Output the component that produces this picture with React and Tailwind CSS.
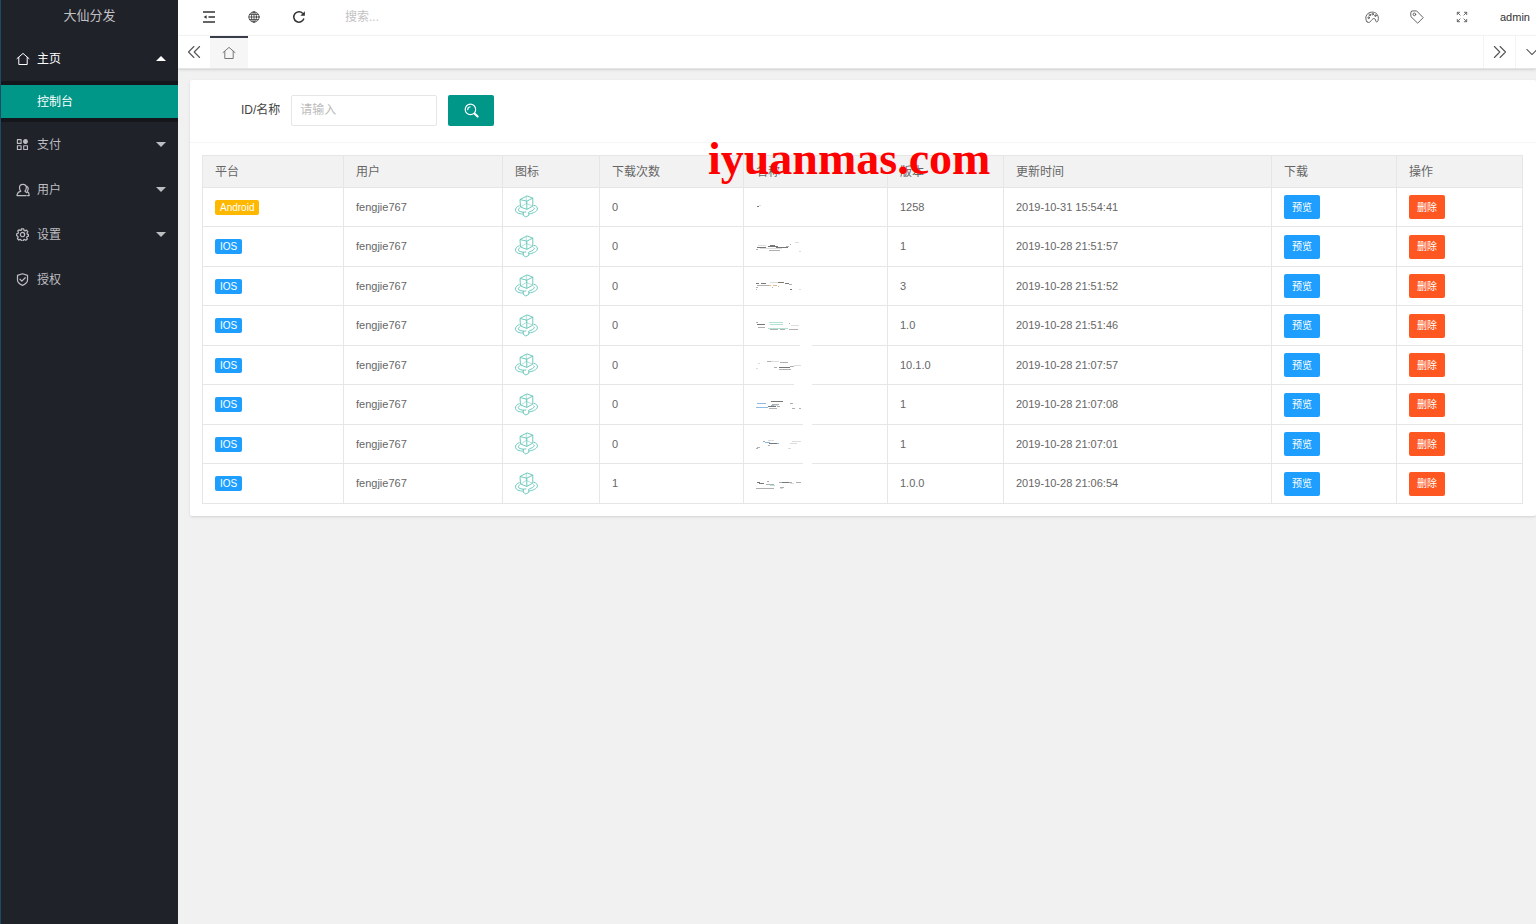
import React from "react";

const FONT = "font-['Liberation_Sans','Noto_Sans_CJK_SC',sans-serif]";

function Icon({ children, className = "size-[14px]", viewBox = "0 0 14 14", width = 1 }) {
  return (
    <svg
      className={"shrink-0 " + className}
      viewBox={viewBox}
      fill="none"
      stroke="currentColor"
      strokeWidth={width}
      strokeLinecap="round"
      strokeLinejoin="round"
      aria-hidden="true"
    >
      {children}
    </svg>
  );
}

const HomeIcon = () => (
  <Icon>
    <path d="M1 6.6 7 1.4l6 5.2M2.8 5.4v7.1h8.4V5.4" />
  </Icon>
);
const AppsIcon = () => (
  <Icon className="size-[13px]" width={1.200}>
    <path d="M1.5 1.8h4v4h-4zM1.5 8.4h4v4h-4zM8.3 8.4h4v4h-4z" />
    <circle cx="10.2" cy="3.8" r="2" fill="currentColor" />
  </Icon>
);
const UserIcon = () => (
  <Icon width={1.200}>
    <path d="M4.800 8.100C3.900 7.300 3.500 6 3.500 4.700 3.500 2.700 5 1.300 6.900 1.300s3.400 1.400 3.400 3.400c0 1.300-.5 2.600-1.400 3.400M4.800 8.100C2.500 8.900 1 10.300 1 12.600h9.200M8.900 8.100c.2.600 1.300.8 1.900 1.500M10.800 3.300c1.300.8 1.700 2.400 1.100 3.700-.3.700-.7 1.100-.4 1.600 1.100.6 1.700 2 1.700 4h-1.600" />
  </Icon>
);
const GearIcon = () => (
  <Icon className="size-[13px]" width={1.300}>
    <path d="M5.700 1h2.600l.4 1.700 1 .4 1.500-.9 1.500 1.800-.9 1.400.3 1.200 1.300.5v1.600l-1.500.6-.4 1 .7 1.500-1.700 1.400-1.300-.9-1 .4-.5 1.400H6l-.6-1.500-1-.4-1.400.8-1.500-1.700.8-1.400-.4-1L.7 8.300V6.200l1.500-.4.4-1-.7-1.500 1.500-1.400 1.400.8 1-.4z" />
    <circle cx="7" cy="7.100" r="2.300" />
  </Icon>
);
const ShieldIcon = () => (
  <Icon className="size-[13px]" width={1.300}>
    <path d="M7 .8 12.400 2.600v5c0 2.600-2.400 4.500-5.400 5.700-3-1.200-5.400-3.100-5.400-5.700v-5z" />
    <path d="m4.300 6.700 2 2 3.600-3.600" />
  </Icon>
);
const MenuFoldIcon = () => (
  <Icon width={1.300}>
    <path d="M1 2h12M6.500 7H13M1 12h12" strokeLinecap="butt" />
    <path d="M4.600 5.200v3.600L1.600 7z" fill="currentColor" stroke="none" />
  </Icon>
);
const GlobeIcon = () => (
  <Icon className="size-[12px]" width={0.900}>
    <circle cx="7" cy="7" r="6" />
    <ellipse cx="7" cy="7" rx="2.900" ry="6" />
    <path d="M7 1v12M1 7h12M1.900 4h10.200M1.900 10h10.200" />
  </Icon>
);
const RefreshIcon = () => (
  <Icon width={1.500}>
    <path d="M11.900 8.600A5.200 5.200 0 1 1 10.800 3.400" strokeLinecap="butt" />
    <path d="M12.900 1.200v4.600H8.300z" fill="currentColor" stroke="none" />
  </Icon>
);
const PaletteIcon = () => (
  <Icon width={0.900}>
    <path d="M2 11.800C.3 9.800.3 6.300 2.200 4.300 4.200 2 8 1.400 10.600 3c2.400 1.500 3.400 4.500 2.400 7.600-.3 1.300-1.400 1.700-2.100.8-.6-.8-.2-1.900-.9-2.500-.9-.8-2.200-.1-3.100.8-1 1.100-1.500 2.400-2.600 2.700-.9.200-1.700 0-2.300-.6z" />
    <circle cx="3.600" cy="7.800" r=".8" />
    <circle cx="4.800" cy="5" r=".8" />
    <circle cx="7.700" cy="4.100" r=".8" />
    <circle cx="10.400" cy="5.700" r=".8" />
  </Icon>
);
const TagIcon = () => (
  <Icon width={0.900}>
    <path d="M.9 2.600 1.600 1l5-.1 6.600 6.700-5.500 5.600L1.200 6.900z" />
    <circle cx="4.400" cy="4.400" r="1.300" />
  </Icon>
);
const ExpandIcon = () => (
  <Icon className="size-[12px]" width={1}>
    <path d="M1.500 4.200V1.500h2.700M1.800 1.800l3 3M9.800 1.500h2.700v2.700M12.200 1.800l-3 3M1.500 9.800v2.700h2.700M1.800 12.200l3-3M12.500 9.800v2.700H9.800M12.200 12.200l-3-3" />
  </Icon>
);
const DoubleLeft = () => (
  <Icon width={1.100}>
    <path d="M6.900 1.500 1.500 7l5.400 5.500M12.600 1.500 7.200 7l5.400 5.500" />
  </Icon>
);
const DoubleRight = () => (
  <Icon width={1.100}>
    <path d="M1.400 1.500 6.800 7l-5.400 5.500M7.100 1.500 12.500 7l-5.400 5.500" />
  </Icon>
);
const ChevronDown = () => (
  <Icon className="size-[12px]" width={1.200}>
    <path d="m1 4 6 6 6-6" />
  </Icon>
);
const SearchIcon = () => (
  <Icon className="size-[15px]" width={1.100}>
    <circle cx="6" cy="6" r="4.900" />
    <path d="M3.500 6.200c0-1.500.9-2.500 2.200-2.700" />
    <path d="m10 10 2.700 2.600" strokeWidth="2" />
  </Icon>
);
const CubeIcon = () => (
  <svg className="block size-6" viewBox="0 0 24 24" fill="none" stroke="#5fc4b5" strokeLinejoin="round" role="img" aria-label="图标">
    <path d="m5 4.500 7-3.600 5.800 2.200v8l-6 3.300-6.300-2.400zM5 4.500l6.800 1.700 6-3.100M11.800 6.200v8.200" strokeWidth="0.900" />
    <path d="m5.500 12 5.800-3.500 6.500 2.600M11.300 8.500V1.500" strokeWidth="0.500" />
    <path d="M4.500 10.500C2 11.500.2 13.300.5 15.300c.3 2.400 3.700 3.900 7.500 3.700M4.800 12.800c-1.400.8-2 2-1.100 2.900 1.500 1.400 5 1.700 7.600 1.200M18.600 10.200c2.700.6 4.100 2.100 3.800 3.900-.4 2.500-4.400 4.400-8.500 4.800M18.700 12.500c1.100.9.500 2.100-1.200 3-1 .6-2.100 1-3.200 1.200M8.300 17v3.400l2.500 1.600 3-1.600V17" strokeWidth="0.900" />
  </svg>
);

function Caret({ up }) {
  return (
    <svg className="ml-auto h-[5px] w-[10px] shrink-0" viewBox="0 0 10 5" fill="currentColor" aria-hidden="true">
      <path d={up ? "M0 5 5 0l5 5z" : "M0 0h10L5 5z"} />
    </svg>
  );
}

const MENU = [
  { label: "支付", icon: AppsIcon, caret: true },
  { label: "用户", icon: UserIcon, caret: true },
  { label: "设置", icon: GearIcon, caret: true },
  { label: "授权", icon: ShieldIcon, caret: false },
];

function MenuItem({ label, icon: Glyph, caret, open }) {
  return (
    <a
      href="#"
      className={"flex h-[45px] items-center pr-3 pl-[15px] " + (open ? "text-white" : "text-[#bdbec1]")}
    >
      <span className="flex w-[21px] shrink-0 items-center">
        <Glyph />
      </span>
      <span>{label}</span>
      {caret && <Caret up={open} />}
    </a>
  );
}

function Sidebar() {
  return (
    <aside className="w-[178px] shrink-0 border-l border-[#1c4a68] bg-[#20222a] text-[12px]">
      <div className="flex h-9 items-center justify-center pb-1 text-[13px] text-[#c0c1c4]">大仙分发</div>
      <nav>
        <MenuItem label="主页" icon={HomeIcon} caret open />
        <div className="bg-[#14161b] py-1">
          <a href="#" className="flex h-[33px] items-center bg-[#009688] pl-9 text-white">控制台</a>
        </div>
        {MENU.map((item) => (
          <MenuItem key={item.label} {...item} />
        ))}
      </nav>
    </aside>
  );
}

function BarButton({ label, children }) {
  return (
    <button type="button" aria-label={label} className="flex h-full w-[45px] items-center justify-center">
      {children}
    </button>
  );
}

function TopBar() {
  return (
    <header className="flex h-9 items-center border-b border-[#f6f6f6] bg-white pb-px pl-2 text-[#333]">
      <BarButton label="侧边伸缩"><MenuFoldIcon /></BarButton>
      <BarButton label="前台"><GlobeIcon /></BarButton>
      <BarButton label="刷新"><RefreshIcon /></BarButton>
      <input
        type="text"
        aria-label="搜索"
        placeholder="搜索..."
        className="h-7 w-40 pl-6 text-[12px] outline-none placeholder:text-[#c2c2c2]"
      />
      <div className="ml-auto flex h-full items-center text-[#555]">
        <BarButton label="主题"><PaletteIcon /></BarButton>
        <BarButton label="便签"><TagIcon /></BarButton>
        <BarButton label="全屏"><ExpandIcon /></BarButton>
        <button type="button" className="w-[52px] pl-4 text-left text-[11px] text-[#333]">admin</button>
      </div>
    </header>
  );
}

function TabBar() {
  return (
    <div className="flex h-[33px] overflow-hidden border-b border-[#e4e4e4] bg-white text-[#555] shadow-sm">
      <button type="button" aria-label="向左" className="flex w-8 items-center justify-center">
        <DoubleLeft />
      </button>
      <a href="#" aria-label="首页" className="flex w-[38px] items-center justify-center border-t-2 border-[#393d49] bg-[#f6f6f6] text-[#777]">
        <HomeIcon />
      </a>
      <div className="-mr-[11px] ml-auto flex">
        <button type="button" aria-label="向右" className="flex w-8 items-center justify-center border-l border-[#f4f4f4]">
          <DoubleRight />
        </button>
        <button type="button" aria-label="更多" className="flex w-8 items-center justify-center border-l border-[#f4f4f4]">
          <ChevronDown />
        </button>
      </div>
    </div>
  );
}

/* Name thumbnails: short coloured strokes, plus the blank patch over the upper rule where there is one. */
const ROWS = [
  { platform: "Android", count: 0, version: "1258", time: "2019-10-31 15:54:41", dark: "M1 9.500h2", pale: "M3 8.500h2" },
  { platform: "IOS", count: 0, version: "1", time: "2019-10-28 21:51:57", dark: "M1 10.500h9M14 8.500h5M12 9.500h10M20 10.500h12", mid: "M0 12.500h2M13 13.500h11M30 9.500h3M34 7.500h1", pale: "M2 8.500h8M4 11.500h22M39 5.500h4M43 14.500h2" },
  { platform: "IOS", count: 0, version: "3", time: "2019-10-28 21:51:52", dark: "M0 7.500h3M5 7.500h5M22 6.500h6M29 7.500h4M34 13.500h2", mid: "M1 9.500h12M0 11.500h2M0 13.500h1M33 8.500h3M16 11.500h1", warm: "M13 9.500h2M17 9.500h4M22 10.500h1", pale: "M14 6.500h8M43 13.500h2" },
  { platform: "IOS", count: 0, version: "1.0", time: "2019-10-28 21:51:46", dark: "M1 8.500h8", mid: "M0 6.500h2M2 11.500h7M33 7.500h1M14 13.500h8M24 13.500h5M33 13.500h9", pale: "M35 9.500h8", green: "M13 6.500h14M14 8.500h13M12 12.500h20" },
  { platform: "IOS", count: 0, version: "10.1.0", time: "2019-10-28 21:07:57", dark: "M23 12.500h11", mid: "M11 6.500h4M24 7.500h8M18 12.500h3M23 14.500h12M34 11.500h4", pale: "M15 6.500h8M2 8.500h2M0 13.500h2M38 10.500h7", patch: [44, 12] },
  { platform: "IOS", count: 0, version: "1", time: "2019-10-28 21:07:08", dark: "M15 6.500h12M12 11.500h8", mid: "M16 9.500h7M21 11.500h3M13 13.500h8M34 8.500h3M36 13.500h3M43 13.500h2", pale: "M18 10.500h4", blue: "M1 8.500h9M0 12.500h12M15 10.500h3", patch: [38, 18] },
  { platform: "IOS", count: 0, version: "1", time: "2019-10-28 21:07:01", dark: "M13 9.500h8", mid: "M7 7.500h2M12 11.500h2M1 13.500h3M0 14.500h2", pale: "M12 6.500h6M36 7.500h9M34 9.500h7M32 14.500h3", blue: "M9 8.500h5M21 9.500h2", patch: [47, 9] },
  { platform: "IOS", count: 1, version: "1.0.0", time: "2019-10-28 21:06:54", dark: "M1 8.500h3M3 9.500h5M26 8.500h7", mid: "M11 7.500h2M10 10.500h8M23 8.500h3M33 8.500h3M40 8.500h5M0 14.500h18M24 13.500h4", pale: "M34 9.500h4M24 14.500h3", green: "M14 11.500h5", patch: [47, 9] },
];

function NameMark({ row }) {
  return (
    <svg className="block h-5 w-[60px] overflow-visible" viewBox="0 0 60 20" fill="none" strokeWidth="1" shapeRendering="crispEdges" role="img" aria-label="名称">
      {row.patch && <rect x={row.patch[0]} y="-14" width={row.patch[1]} height="8" fill="#fff" />}
      {row.pale && <path d={row.pale} stroke="#dddddd" />}
      {row.green && <path d={row.green} stroke="#b4e2d3" />}
      {row.blue && <path d={row.blue} stroke="#8fbbe2" />}
      {row.warm && <path d={row.warm} stroke="#e8b98c" />}
      {row.mid && <path d={row.mid} stroke="#b0b0b0" />}
      <path d={row.dark} stroke="#777777" />
    </svg>
  );
}

const COLUMNS = [
  ["平台", "w-[141px]"],
  ["用户", "w-[159px]"],
  ["图标", "w-[97px]"],
  ["下载次数", "w-[144px]"],
  ["名称", "w-[144px]"],
  ["版本", "w-[116px]"],
  ["更新时间", "w-[268px]"],
  ["下载", "w-[125px]"],
  ["操作", "w-[126px]"],
];

const CELL = "border border-[#e6e6e6] px-3 py-0";

function AppTable() {
  return (
    <table className="w-full table-fixed border-collapse text-left text-[11px] text-[#666]">
      <thead>
        <tr className="h-8 bg-[#f2f2f2] text-[12px]">
          {COLUMNS.map(([name, width]) => (
            <th key={name} scope="col" className={CELL + " font-normal " + width}>{name}</th>
          ))}
        </tr>
      </thead>
      <tbody>
        {ROWS.map((row) => (
          <tr key={row.time} className="odd:h-[39px] even:h-10">
            <td className={CELL}>
              <span
                className={
                  "flex h-[15px] w-fit items-center rounded-xs px-[5px] text-[10px] text-white " +
                  (row.platform === "Android" ? "bg-[#ffb800]" : "bg-[#1e9fff]")
                }
              >
                {row.platform}
              </span>
            </td>
            <td className={CELL}>fengjie767</td>
            <td className={CELL}><CubeIcon /></td>
            <td className={CELL}>{row.count}</td>
            <td className={CELL}><NameMark row={row} /></td>
            <td className={CELL}>{row.version}</td>
            <td className={CELL}>{row.time}</td>
            <td className={CELL}>
              <button type="button" className="flex h-6 w-9 items-center justify-center rounded-xs bg-[#1e9fff] text-[10px] text-white">预览</button>
            </td>
            <td className={CELL}>
              <button type="button" className="flex h-6 w-9 items-center justify-center rounded-xs bg-[#ff5722] text-[10px] text-white">删除</button>
            </td>
          </tr>
        ))}
      </tbody>
    </table>
  );
}

export default function App() {
  return (
    <div className={"flex min-h-screen bg-[#f1f1f1] " + FONT}>
      <Sidebar />
      <div className="min-w-0 flex-1">
        <TopBar />
        <TabBar />
        <main className="pt-[11px] pl-3">
          <section className="relative rounded-xs bg-white shadow-sm">
            <form className="flex h-[63px] items-center border-b border-[#f6f6f6] pb-[2px] pl-[51px] text-[12px]">
              <label htmlFor="keyword" className="mr-[11px] text-[#444]">ID/名称</label>
              <input
                id="keyword"
                type="text"
                placeholder="请输入"
                className="mr-[11px] h-[31px] w-[146px] rounded-xs border border-[#e6e6e6] px-2 outline-none placeholder:text-[#bbb]"
              />
              <button type="button" aria-label="搜索" className="flex h-[31px] w-[46px] items-center justify-center rounded-xs bg-[#009688] text-white">
                <SearchIcon />
              </button>
            </form>
            <div className="pt-3 pr-[13px] pb-3 pl-3">
              <AppTable />
            </div>
            <div className="pointer-events-none absolute top-[53px] left-[518px] font-['Liberation_Serif',serif] text-[46px] leading-[52px] font-bold text-[#f00]">
              iyuanmas.com
            </div>
          </section>
        </main>
      </div>
    </div>
  );
}
